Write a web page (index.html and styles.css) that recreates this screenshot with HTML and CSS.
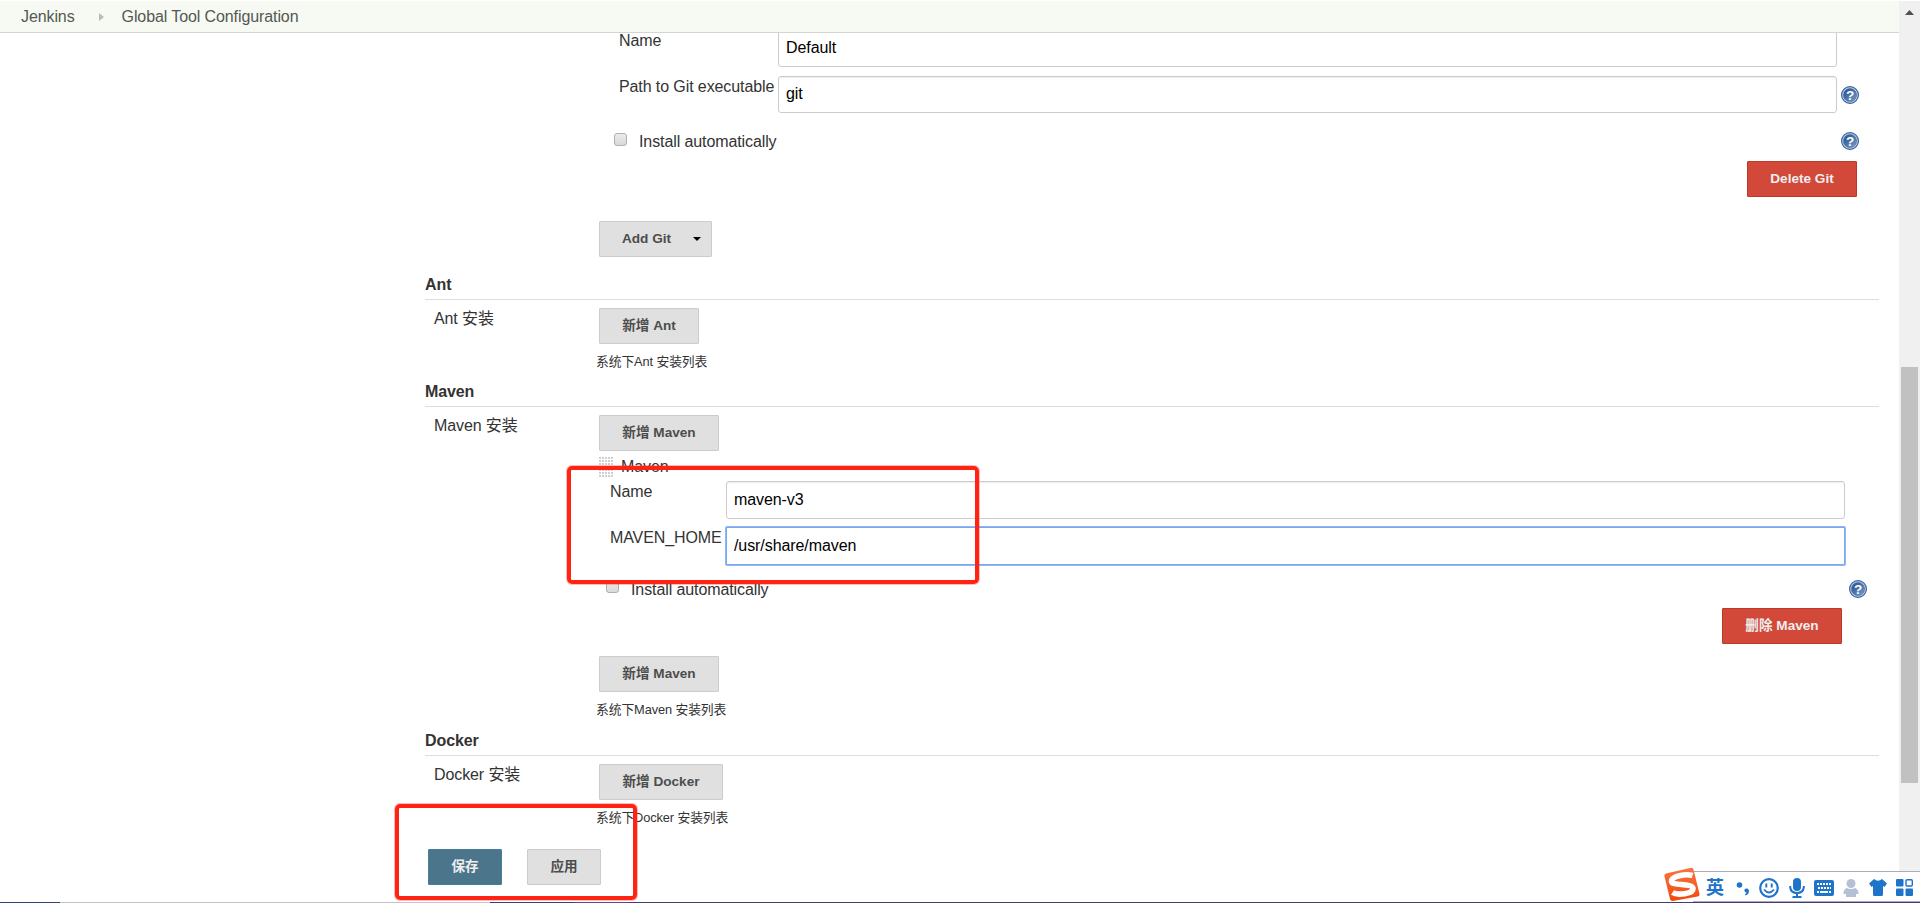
FILE: index.html
```
<!DOCTYPE html>
<html lang="zh-CN">
<head>
  <meta charset="UTF-8">
  <title>Global Tool Configuration [Jenkins]</title>
  <link rel="stylesheet" href="styles.css">
</head>
<body>
  <svg class="defs" width="0" height="0">
    <defs>
      <linearGradient id="helpFill" x1="0" y1="0" x2="1" y2="1">
        <stop offset="0" stop-color="#214a86"/>
        <stop offset="1" stop-color="#7b9cc8"/>
      </linearGradient>
      <linearGradient id="logoFill" x1="0" y1="0" x2="0" y2="1">
        <stop offset="0" stop-color="#fb7542"/>
        <stop offset="1" stop-color="#f04a0c"/>
      </linearGradient>
      <pattern id="dots" width="3" height="3" patternUnits="userSpaceOnUse">
        <rect width="2" height="2" fill="#d0d0d0"/>
      </pattern>
      <symbol id="help" viewBox="0 0 18 18">
        <circle cx="9" cy="9" r="8.4" fill="#c6d6ea" stroke="#36619f" stroke-width="1.2"/>
        <circle cx="9" cy="9" r="6.6" fill="url(#helpFill)" stroke="#4a72ab" stroke-width=".6"/>
        <text x="9" y="13.7" text-anchor="middle" font-family="Liberation Sans" font-size="13.5" font-weight="bold" fill="#fff">?</text>
      </symbol>
    </defs>
  </svg>

  <div class="breadcrumbs">
    <a>Jenkins</a>
    <svg class="arrow" width="5" height="8"><path d="M0 0L5 4L0 8Z" fill="#b9bcb6"/></svg>
    <a>Global Tool Configuration</a>
  </div>

  <div class="page">
    <form class="config">
      <div class="tool git">
        <div class="field">
          <label>Name</label>
          <input type="text" value="Default">
        </div>
        <div class="field">
          <label>Path to Git executable</label>
          <input type="text" value="git">
          <svg class="help" width="18" height="18"><use href="#help"/></svg>
        </div>
        <div class="check">
          <span class="box"></span>
          <span>Install automatically</span>
          <svg class="help" width="18" height="18"><use href="#help"/></svg>
        </div>
        <div class="remove"><button type="button" class="danger">Delete Git</button></div>
      </div>
      <div class="add-git">
        <button type="button" class="menu">Add Git <svg width="8" height="4"><path d="M0 0H8L4 4Z" fill="#000"/></svg></button>
      </div>

      <h2>Ant</h2>
      <div class="row">
        <div class="name">Ant 安装</div>
        <div class="setting">
          <button type="button" class="w-ant">新增 Ant</button>
          <p>系统下Ant 安装列表</p>
        </div>
      </div>

      <h2>Maven</h2>
      <div class="row">
        <div class="name">Maven 安装</div>
        <div class="setting">
          <button type="button" class="w-maven">新增 Maven</button>
          <div class="tool maven">
            <div class="grip">
              <svg width="14" height="21"><rect width="14" height="21" fill="url(#dots)"/></svg>
              <span>Maven</span>
            </div>
            <div class="field">
              <label>Name</label>
              <input type="text" value="maven-v3">
            </div>
            <div class="field">
              <label>MAVEN_HOME</label>
              <input type="text" class="focused" value="/usr/share/maven">
            </div>
            <div class="check">
              <span class="box"></span>
              <span>Install automatically</span>
              <svg class="help" width="18" height="18"><use href="#help"/></svg>
            </div>
            <div class="remove"><button type="button" class="danger w-maven">删除 Maven</button></div>
          </div>
          <button type="button" class="w-maven">新增 Maven</button>
          <p>系统下Maven 安装列表</p>
        </div>
      </div>

      <h2>Docker</h2>
      <div class="row">
        <div class="name">Docker 安装</div>
        <div class="setting">
          <button type="button" class="w-docker">新增 Docker</button>
          <p>系统下Docker 安装列表</p>
        </div>
      </div>

      <div class="submit">
        <button type="button" class="primary">保存</button>
        <button type="button">应用</button>
      </div>
    </form>
  </div>

  <div class="scrollbar">
    <svg width="9" height="5"><path d="M0 5L4.5 0L9 5Z" fill="#505050"/></svg>
    <div class="thumb"></div>
  </div>

  <div class="mark mark-maven"></div>
  <div class="mark mark-save"></div>

  <div class="ime">
    <svg class="logo" width="38" height="36" viewBox="0 0 38 36">
      <path d="M3 6.5Q1 7 1.4 9L7 32Q7.6 34.5 10 34L34.5 29.5Q37 29 36.4 26.5L30.5 2.5Q30 .5 28 .8Z" fill="url(#logoFill)"/>
      <path d="M29.5 8.5C23 6.5 8 9 8.5 14.5C9 19 29.5 16 30 21.5C30.5 27 14 28.5 9.5 25.5" fill="none" stroke="#fff" stroke-width="5.6"/>
    </svg>
    <span class="lang">英</span>
    <svg class="punct" width="14" height="16"><circle cx="3.5" cy="4" r="2.8"/><path d="M8.5 8.5A2.5 2.5 0 0 1 13 9.5C13 12 12 14 9.5 14.5L9 13Q10.5 12.5 10.5 11.5Q8 11 8.5 8.5Z"/></svg>
    <svg class="smile" width="20" height="20"><circle cx="10" cy="10" r="8.8" fill="none" stroke="#1e74c8" stroke-width="2.2"/><path d="M7.3 5.5V9.5M12.7 5.5V9.5M5 11.5Q10 17.5 15 11.5" fill="none" stroke="#1e74c8" stroke-width="1.9"/></svg>
    <svg class="mic" width="16" height="20"><rect x="4" width="8" height="13" rx="4"/><path d="M1.2 8V9.5Q2 15 8 15Q14 15 14.8 9.5V8M8 15V19M3.5 19H12.5" fill="none" stroke="#1e74c8" stroke-width="2"/></svg>
    <svg class="keys" width="20" height="16"><rect width="20" height="16" rx="2"/><path d="M3 4H17M4 8H17M3 12H5M15 12H17" fill="none" stroke="#fff" stroke-width="2" stroke-dasharray="2 1"/><path d="M6 12H14" stroke="#fff" stroke-width="2"/></svg>
    <svg class="user" width="16" height="18"><circle cx="8" cy="4.5" r="4.5"/><path d="M3.5 9Q8 11 12.5 9Q16 11.5 15.5 15H13V18H3V15H.5Q0 11.5 3.5 9Z"/></svg>
    <svg class="shirt" width="18" height="17"><path d="M5 0Q9 3.5 13 0L18 4.5L15.5 8L14 7V15.5Q14 17 12.5 17H5.5Q4 17 4 15.5V7L2.5 8L0 4.5Z"/></svg>
    <svg class="grid" width="17" height="17"><rect width="7.5" height="7.5" rx="1"/><rect x="10" y=".7" width="6.3" height="6.3" rx="1" fill="#fff" stroke="#1e74c8" stroke-width="1.4"/><rect y="9.5" width="7.5" height="7.5" rx="1"/><rect x="9.5" y="9.5" width="7.5" height="7.5" rx="1"/></svg>
  </div>
  <div class="desktop-edge"></div>
</body>
</html>
```
FILE: styles.css
```
* {
  box-sizing: border-box;
}

body {
  margin: 0;
  height: 903px;
  overflow: hidden;
  background: #fff;
  color: #333;
  font: 16px/20px "Liberation Sans", Arial, "Noto Sans CJK SC", sans-serif;
  letter-spacing: -0.1px;
}

.defs {
  position: absolute;
}

.breadcrumbs {
  position: fixed;
  z-index: 2;
  top: 0;
  left: 0;
  width: 1899px;
  height: 33px;
  padding-left: 21px;
  display: flex;
  align-items: center;
  background: #f6faf2;
  border-top: 1px solid #fff;
  border-bottom: 1px solid #d3d7cf;
  color: #555753;
}

.breadcrumbs .arrow {
  margin: 1px 18px 0 24px;
}

.config {
  width: 1453px;
  margin-left: 425px;
  padding-top: 30px;
}

h2 {
  margin: 0 -1px 0 0;
  height: 25px;
  border-bottom: 1px solid #ddd;
  font-size: 16px;
  line-height: 20px;
}

input {
  flex: 1;
  min-width: 0;
  height: 37px;
  padding: 0 7px;
  border: 1px solid #ccc;
  border-radius: 3px;
  box-shadow: inset 0 1px 1px rgba(0, 0, 0, .075);
  background: #fff;
  color: #000;
  font: inherit;
  letter-spacing: -0.08px;
}

input.focused {
  border-color: #7ba7ec;
  border-radius: 1px;
  box-shadow: 0 0 0 1px #8fb6f5;
}

button {
  width: 74px;
  height: 36px;
  padding: 0;
  display: block;
  background: #e0e0e0;
  border: 1px solid #ccc;
  border-radius: 1px;
  color: #4d4d4d;
  font: bold 13.6px/20px "Liberation Sans", Arial, "Noto Sans CJK SC", sans-serif;
}

button.danger {
  width: 110px;
  background: #d24939;
  border-color: #bd3827;
  color: #eee;
}

button.primary {
  background: #4b758b;
  border-color: #487e98;
  color: #eee;
}

button.menu {
  width: 113px;
  display: flex;
  align-items: center;
  padding-left: 22px;
  gap: 22px;
}

button.w-ant {
  width: 100px;
}

button.w-maven,
button.danger.w-maven {
  width: 120px;
}

button.w-docker {
  width: 124px;
}

/* tool entries */
.field {
  display: flex;
}

.field label {
  flex: none;
  white-space: nowrap;
}

.check {
  display: flex;
  align-items: flex-start;
  height: 20px;
}

.box {
  width: 13px;
  height: 13px;
  margin-right: 12px;
  border: 1px solid #b0b0b0;
  border-radius: 3px;
  background: linear-gradient(#ebebeb, #d9d9d9);
}

.check .help {
  margin-left: auto;
}

.remove {
  display: flex;
  justify-content: flex-end;
}

.git {
  padding-left: 193px;
}

.git .field {
  height: 37px;
  margin-bottom: 9px;
}

.git .field input {
  padding-bottom: 1px;
}

.git label {
  width: 160px;
  padding: 1px 0 0 1px;
}

.git .field:first-child {
  padding-right: 41px;
}

.git .field:nth-child(2) {
  padding-right: 19px;
}

.git .field .help {
  margin: 10px 0 0 4px;
}

.git .check {
  margin: 19px 19px 0 -4px;
}

.git .box {
  margin-top: 1px;
}

.git .remove {
  margin-top: 9px;
  padding-right: 21px;
}

.add-git {
  padding: 24px 0 18px 174px;
}

/* sections */
.row {
  display: flex;
}

.name {
  width: 174px;
  padding: 9px 0 0 9px;
}

.setting {
  flex: 1;
  padding-top: 8px;
}

.setting p {
  margin: 8px 0 10px -3px;
  font-size: 12.8px;
  line-height: 20px;
  height: 20px;
}

.grip {
  display: flex;
  gap: 8px;
  height: 24px;
  margin-left: -11px;
}

.maven {
  padding: 6px 0 0 11px;
}

.maven ~ p {
  margin-bottom: 11px;
}

.maven .field {
  padding-right: 33px;
  margin-bottom: 8px;
}

.maven .field input {
  height: 38px;
}

.maven .field label {
  width: 116px;
  padding-top: 1px;
}

.maven .check {
  margin: 15px 11px 0 -4px;
}

.maven .remove {
  margin: 8px 36px 12px 0;
}

.submit {
  display: flex;
  gap: 25px;
  padding: 11px 0 0 3px;
}

/* browser scrollbar */
.scrollbar {
  position: fixed;
  top: 1px;
  right: 0;
  width: 21px;
  height: 902px;
  background: #f0f0f0;
  padding-left: 2px;
}

.scrollbar svg {
  display: block;
  margin: 9px 0 0 4px;
}

.thumb {
  width: 17px;
  height: 416px;
  margin-top: 352px;
  background: #c1c1c1;
}

/* annotation frames */
.mark {
  position: absolute;
  z-index: 3;
  border: 4px solid #ff2314;
  border-radius: 5px;
  box-shadow: 0 0 0 1px rgba(255, 35, 20, .3);
}

.mark-maven {
  left: 567px;
  top: 466px;
  width: 412px;
  height: 118px;
}

.mark-save {
  left: 395px;
  top: 804px;
  width: 242px;
  height: 96px;
}

/* input method toolbar */
.ime {
  position: fixed;
  z-index: 3;
  right: 0;
  bottom: 1px;
  width: 227px;
  height: 31px;
  padding-top: 2px;
  display: flex;
  align-items: center;
  background: #fff;
  border-top: 1px solid #aaadb9;
  border-bottom: 1px solid #aaadb9;
  color: #1e74c8;
  fill: #1e74c8;
}

.ime svg {
  flex: none;
}

.ime .logo {
  margin: -5px 3px 0 -30px;
}

.lang {
  width: 19px;
  margin: 0 12px 0 2px;
  font-weight: bold;
  font-size: 18px;
  line-height: 28px;
}

.ime .punct {
  margin: 2px 9px 0 -1px;
}

.ime .smile {
  margin-right: 10px;
}

.ime .mic {
  margin-right: 9px;
}

.ime .keys {
  margin-right: 9px;
}

.ime .user {
  margin-right: 10px;
  fill: #b5c0d6;
}

.ime .shirt {
  margin-right: 9px;
}

.desktop-edge {
  position: fixed;
  left: 0;
  right: 0;
  bottom: 0;
  height: 1px;
  background: linear-gradient(90deg, #34407c 60px, #c4c4c4 60px, #c4c4c4 490px, #34407c 490px, #34407c 574px, #5b44a0 574px, #5b44a0 629px, #453a72 629px);
}
```
